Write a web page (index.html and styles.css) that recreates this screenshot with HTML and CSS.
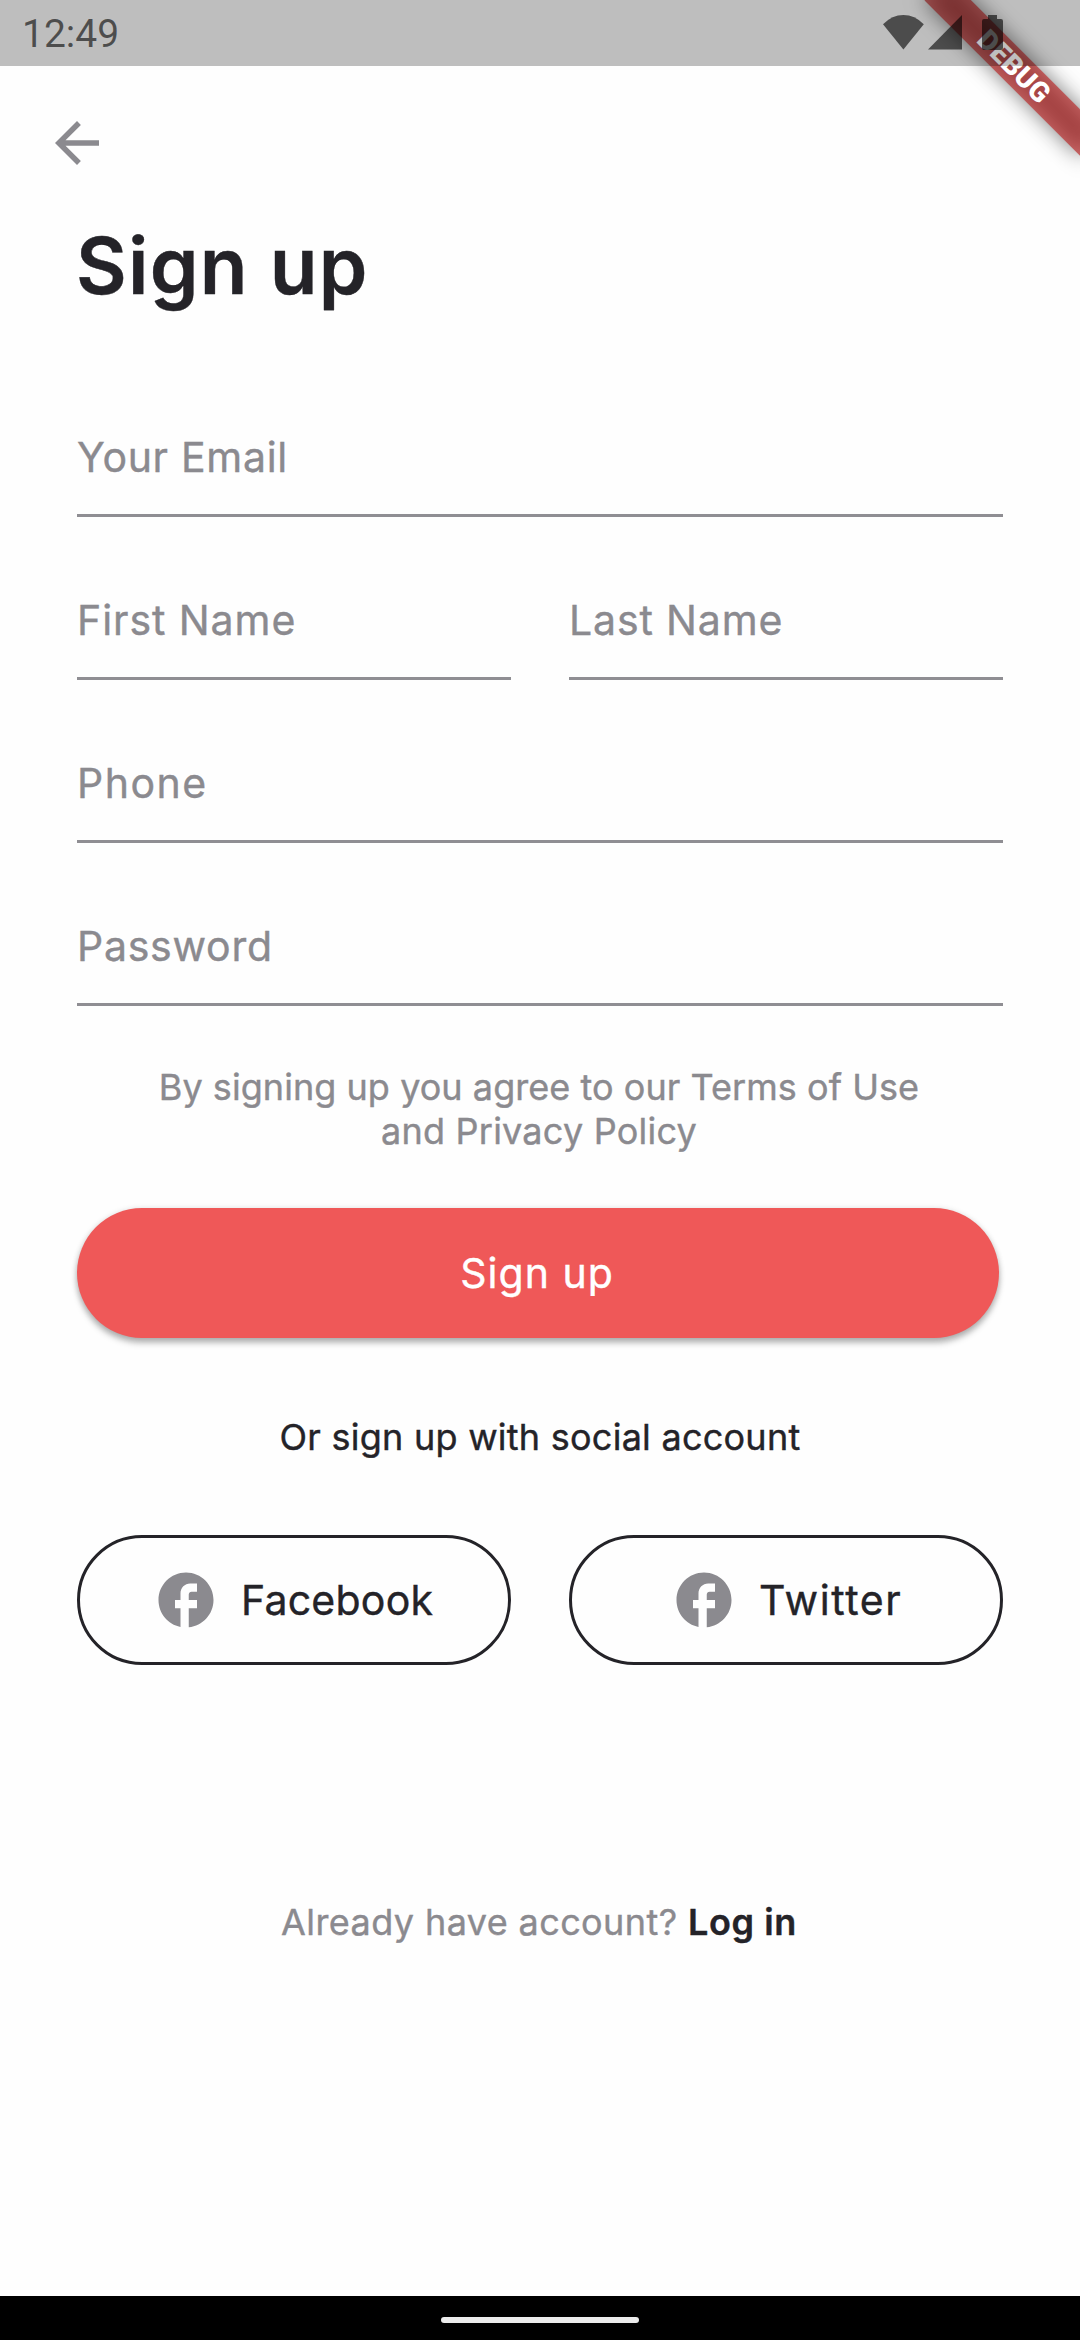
FILE: index.html
```html
<!DOCTYPE html>
<html lang="en">
<head>
<meta charset="utf-8">
<title>Sign up</title>
<link rel="stylesheet" href="styles.css">
</head>
<body>
<div class="screen">
  <header class="status-bar">
    <span class="clock">12:49</span>
    <svg class="status-icons" width="120" height="35" viewBox="883 15 120 35" aria-hidden="true">
      <path d="M903.4 49.5 883 24.3Q892 15 903.4 15T923.8 24.3Z"/>
      <path d="M928 49.5 962 15V49.5Z"/>
      <path d="M988 15h9v4h4q2 0 2 2v27q0 2-2 2h-17q-2 0-2-2V21q0-2 2-2h4z"/>
    </svg>
  </header>

  <main class="content">
    <button class="back" aria-label="Back">
      <svg width="66" height="66" viewBox="0 0 24 24"><path d="M20 11H7.83l5.59-5.59L12 4l-8 8 8 8 1.41-1.41L7.83 13H20v-2z"/></svg>
    </button>
    <h1 class="title">Sign up</h1>

    <form class="form">
      <div class="field email">Your Email</div>
      <div class="row">
        <div class="field first-name">First Name</div>
        <div class="field last-name">Last Name</div>
      </div>
      <div class="field phone">Phone</div>
      <div class="field password">Password</div>
    </form>

    <p class="terms">By signing up you agree to our Terms of Use<br><span class="terms-end">and Privacy Policy</span></p>
    <button class="submit">Sign up</button>
    <p class="social-title">Or sign up with social account</p>

    <div class="row">
      <button class="social facebook">
        <svg width="66" height="66" viewBox="0 0 24 24"><path d="M22 12c0-5.52-4.48-10-10-10S2 6.48 2 12c0 4.84 3.44 8.87 8 9.8V15H8v-3h2V9.5C10 7.57 11.57 6 13.5 6H16v3h-2c-.55 0-1 .45-1 1v2h3v3h-3v6.95c5.05-.5 9-4.76 9-9.95z"/></svg>
        <span>Facebook</span>
      </button>
      <button class="social twitter">
        <svg width="66" height="66" viewBox="0 0 24 24"><path d="M22 12c0-5.52-4.48-10-10-10S2 6.48 2 12c0 4.84 3.44 8.87 8 9.8V15H8v-3h2V9.5C10 7.57 11.57 6 13.5 6H16v3h-2c-.55 0-1 .45-1 1v2h3v3h-3v6.95c5.05-.5 9-4.76 9-9.95z"/></svg>
        <span>Twitter</span>
      </button>
    </div>

    <p class="login">Already have account? <a class="login-link">Log in</a></p>
  </main>

  <footer class="nav-bar"><span class="nav-pill"></span></footer>
  <div class="banner"><span class="banner-label">DEBUG</span></div>
</div>
</body>
</html>
```
FILE: styles.css
```css
* {
  box-sizing: border-box;
}

body {
  margin: 0;
  background: #fefefe;
  font-family: Inter, Roboto, sans-serif;
  color: #242328;
}

button {
  padding: 0;
  border: 0;
  background: none;
  font: inherit;
  color: inherit;
}

h1,
p {
  margin: 0;
}

.screen {
  position: relative;
  display: flex;
  flex-direction: column;
  width: 1080px;
  height: 2340px;
  overflow: hidden;
}

.status-bar {
  position: relative;
  z-index: 2;
  display: flex;
  justify-content: space-between;
  align-items: flex-start;
  height: 66px;
  padding: 15px 77px 0 22px;
  background: rgba(0, 0, 0, 0.25);
}

.clock {
  font: 39px/39px Roboto, sans-serif;
  color: rgba(0, 0, 0, 0.6);
}

.status-icons {
  fill: rgba(0, 0, 0, 0.6);
}

.content {
  flex: 1;
  padding: 44px 77px 0;
  -webkit-text-stroke: 0.4px;
}

.back {
  display: block;
  width: 66px;
  height: 66px;
  margin-left: -33px;
}

.back svg {
  display: block;
  fill: #8b8a8f;
}

.title {
  margin-top: 42px;
  font-size: 78px;
  font-weight: 600;
  line-height: 96px;
  letter-spacing: 1.3px;
  margin-left: -1px;
}

.form {
  display: flex;
  flex-direction: column;
  gap: 73px;
  margin-top: 113px;
}

.row {
  display: grid;
  grid-template-columns: 1fr 1fr;
  gap: 58px;
}

.field {
  height: 90px;
  border-bottom: 3px solid #8f8e93;
  font-size: 41px;
  line-height: 60px;
  color: #8b8a8f;
}

.email { letter-spacing: 0.7px; }
.first-name { letter-spacing: 0.94px; }
.last-name { letter-spacing: 0.85px; }
.phone { letter-spacing: 1.5px; }
.password { letter-spacing: 0.75px; }

.terms {
  margin-top: 59px;
  padding-right: 2px;
  font-size: 36px;
  line-height: 44px;
  letter-spacing: 0.05px;
  text-align: center;
  color: #8b8a8f;
}

.terms-end {
  letter-spacing: 0.22px;
}

.submit {
  display: block;
  width: 922px;
  height: 130px;
  margin-top: 55px;
  padding-right: 2px;
  border-radius: 65px;
  background: #ef5858;
  box-shadow: 0 5px 6px rgba(0, 0, 0, 0.26), 0 1px 6px rgba(0, 0, 0, 0.14);
  font-size: 41px;
  letter-spacing: 1px;
  color: #fff;
}

.social-title {
  margin: 77px 0 76px;
  font-size: 36px;
  line-height: 44px;
  letter-spacing: 0.25px;
  text-align: center;
}

.social {
  display: flex;
  align-items: center;
  gap: 22.5px;
  height: 130px;
  border: 3px solid #242328;
  border-radius: 65px;
  font-size: 41px;
}

.social svg {
  flex: none;
  fill: #8b8a8f;
}

.facebook {
  padding-left: 72.5px;
  letter-spacing: 0.24px;
}

.twitter {
  padding-left: 98.5px;
  letter-spacing: 1.6px;
}

.login {
  margin-top: 235px;
  padding-right: 2px;
  font-size: 36px;
  line-height: 44px;
  letter-spacing: 0.4px;
  text-align: center;
  color: #8b8a8f;
}

.login-link {
  font-weight: 600;
  letter-spacing: 0.6px;
  color: #242328;
}

.nav-bar {
  display: flex;
  justify-content: center;
  height: 44px;
  padding-top: 21px;
  background: #000;
}

.nav-pill {
  width: 198px;
  height: 6px;
  border-radius: 3px;
  background: #ebebeb;
}

/* Corner ribbon: a blurred shadow below a translucent red band */
.banner {
  position: absolute;
  z-index: 1;
  top: 49.5px;
  left: 904px;
  width: 220px;
  height: 33px;
  transform: rotate(45deg);
}

.banner::before,
.banner::after {
  content: "";
  position: absolute;
  inset: 0;
}

.banner::before {
  background: rgba(0, 0, 0, 0.5);
  filter: blur(10.9px);
}

.banner::after {
  background: rgba(183, 28, 28, 0.63);
}

.banner-label {
  position: relative;
  z-index: 1;
  display: block;
  font: 900 28px/33px Roboto, sans-serif;
  text-align: center;
  color: #fff;
}
```
